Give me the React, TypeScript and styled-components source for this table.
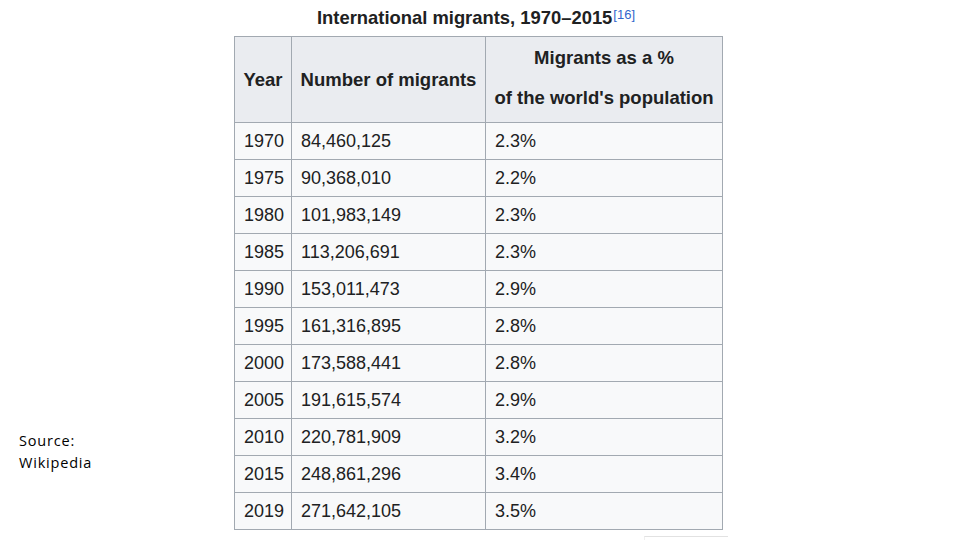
import React from "react";
import styled, { createGlobalStyle } from "styled-components";

const Global = createGlobalStyle`
  html, body { margin: 0; padding: 0; background: #ffffff; }
  body { width: 960px; height: 540px; overflow: hidden; }
`;

const Page = styled.div`
  display: flex;
  width: 960px;
  height: 540px;
  font-family: "Liberation Sans", Arial, sans-serif;
  color: #202122;
`;

const Side = styled.div`
  width: 234px;
  flex-shrink: 0;
  display: flex;
  flex-direction: column;
  justify-content: flex-end;
  padding: 0 0 66px 19px;
  box-sizing: border-box;
`;

const SourceNote = styled.div`
  font-family: "Open Sans", "Noto Sans", sans-serif;
  font-size: 14.5px;
  letter-spacing: 0.8px;
  line-height: 22px;
  color: #000;
`;

const Main = styled.div`
  display: flex;
  flex-direction: column;
  width: 488px;
`;

const Caption = styled.div`
  flex-shrink: 0;
  height: 36px;
  display: flex;
  align-items: center;
  justify-content: center;
  font-weight: bold;
  font-size: 18.4px;
  padding-bottom: 1px;
  padding-right: 4px;
  box-sizing: border-box;
`;

const Ref = styled.sup`
  font-weight: normal;
  font-size: 13px;
  color: #3366cc;
  vertical-align: top;
  line-height: 1;
  position: relative;
  top: -3px;
  margin-left: 1px;
`;

const Table = styled.table`
  flex-shrink: 0;
  border-collapse: collapse;
  table-layout: fixed;
  width: 488px;
  font-size: 18px;
`;

const Th = styled.th<{ $w?: number }>`
  box-sizing: border-box;
  background: #eaecf0;
  border: 1px solid #a2a9b1;
  font-weight: bold;
  font-size: 18.5px;
  height: 86px;
  padding: 0 7px;
  text-align: center;
  white-space: nowrap;
  ${(p) => (p.$w ? `width: ${p.$w}px;` : "")}
`;

const HeadLines = styled.div`
  display: flex;
  flex-direction: column;
  line-height: 40px;
  padding-bottom: 4px;
`;

const Td = styled.td`
  box-sizing: border-box;
  background: #f8f9fa;
  border: 1px solid #a2a9b1;
  height: 37px;
  padding: 0 9px;
  white-space: nowrap;
  text-align: left;
`;

const Tail = styled.div`
  flex-shrink: 0;
  align-self: flex-end;
  width: 83px;
  height: 3px;
  margin-top: 6px;
  margin-right: -6px;
  border-top: 1px solid #e2e2e2;
  border-left: 1px solid #efefef;
`;

const rows: [string, string, string][] = [
  ["1970", "84,460,125", "2.3%"],
  ["1975", "90,368,010", "2.2%"],
  ["1980", "101,983,149", "2.3%"],
  ["1985", "113,206,691", "2.3%"],
  ["1990", "153,011,473", "2.9%"],
  ["1995", "161,316,895", "2.8%"],
  ["2000", "173,588,441", "2.8%"],
  ["2005", "191,615,574", "2.9%"],
  ["2010", "220,781,909", "3.2%"],
  ["2015", "248,861,296", "3.4%"],
  ["2019", "271,642,105", "3.5%"],
];

export default function App() {
  return (
    <>
      <Global />
      <Page>
        <Side>
          <SourceNote>
            Source:
            <br />
            Wikipedia
          </SourceNote>
        </Side>
        <Main>
          <Caption>
            International migrants, 1970–2015<Ref>[16]</Ref>
          </Caption>
          <Table>
            <thead>
              <tr>
                <Th $w={57}>Year</Th>
                <Th $w={194}>Number of migrants</Th>
                <Th $w={237}>
                  <HeadLines>
                    <span>Migrants as a %</span>
                    <span>of the world's population</span>
                  </HeadLines>
                </Th>
              </tr>
            </thead>
            <tbody>
              {rows.map(([y, n, p]) => (
                <tr key={y}>
                  <Td>{y}</Td>
                  <Td>{n}</Td>
                  <Td>{p}</Td>
                </tr>
              ))}
            </tbody>
          </Table>
          <Tail />
        </Main>
      </Page>
    </>
  );
}
